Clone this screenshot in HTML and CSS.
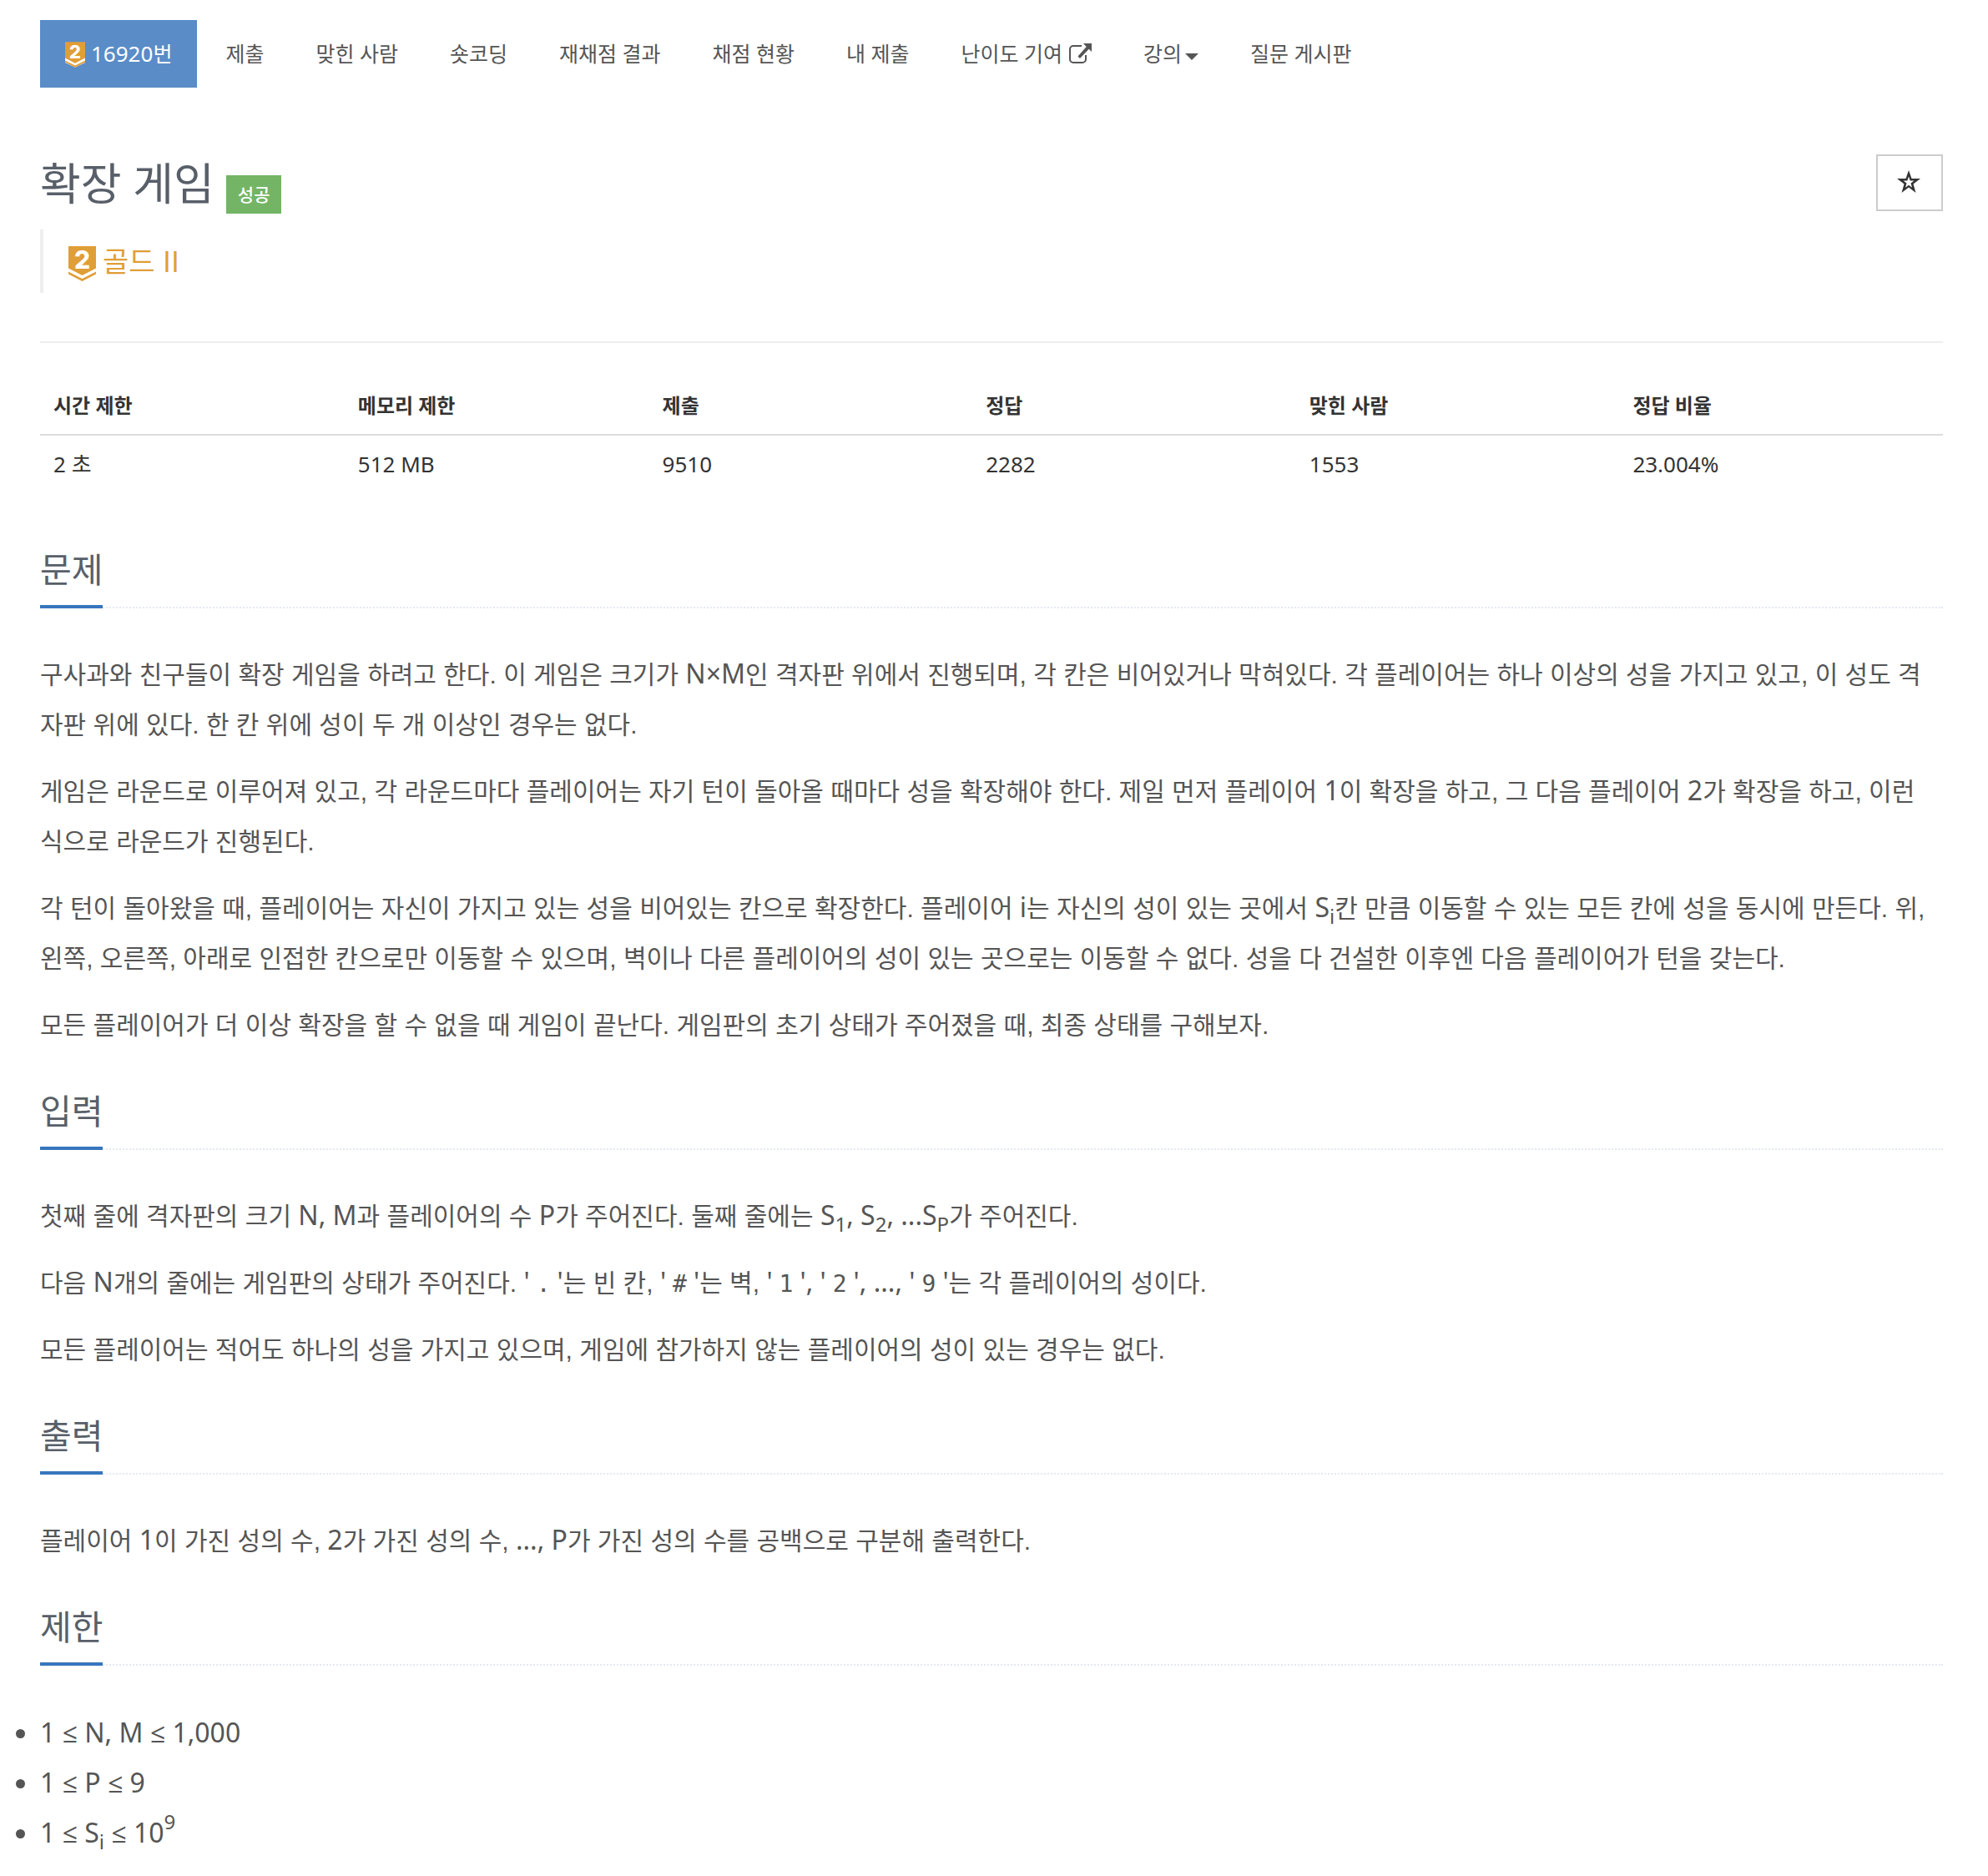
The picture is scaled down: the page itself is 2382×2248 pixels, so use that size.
FILE: index.html
```
<!DOCTYPE html>
<html lang="ko">
<head>
<meta charset="utf-8">
<meta name="viewport" content="width=device-width, initial-scale=1">
<title>16920번: 확장 게임</title>
<link rel="stylesheet" href="styles.css">
</head>
<body>
<nav aria-label="문제 메뉴">
  <ul class="menu">
    <li><a class="menu-link active" href="#"><svg class="tier-small" viewBox="0 0 33 42" aria-hidden="true">
      <path fill="#fff" d="M0 26h33v8L16.500 42 0 34z"/>
      <path fill="#e09e37" d="M0 0h33v26.500L16.500 35 0 26.500z"/>
      <path fill="#e09e37" d="M0 30.500l16.500 8.500 16.500-8.500v3L16.500 42 0 33.500z"/>
      <text class="tier-digit" x="16.500" y="27" text-anchor="middle">2</text>
    </svg><span><span class="latin">16920</span>번</span></a></li>
    <li><a class="menu-link" href="#">제출</a></li>
    <li><a class="menu-link" href="#">맞힌 사람</a></li>
    <li><a class="menu-link" href="#">숏코딩</a></li>
    <li><a class="menu-link" href="#">재채점 결과</a></li>
    <li><a class="menu-link" href="#">채점 현황</a></li>
    <li><a class="menu-link" href="#">내 제출</a></li>
    <li><a class="menu-link" href="#">난이도 기여
      <svg class="external" viewBox="0 0 27 24" aria-hidden="true"><path fill="none" stroke="currentColor" stroke-width="2" d="M15 3H5a4 4 0 0 0-4 4v12a4 4 0 0 0 4 4h11a4 4 0 0 0 4-4v-5"/><path fill="currentColor" d="M17 0h10v10l-3.300-3.300L13 18l-2.500-2.500L20.700 4z"/></svg></a></li>
    <li><a class="menu-link" href="#">강의<span class="caret"></span></a></li>
    <li><a class="menu-link" href="#">질문 게시판</a></li>
  </ul>
</nav>
<main>
  <header class="page-header">
    <div>
      <h1>확장 게임 <span class="label">성공</span></h1>
      <blockquote class="tier"><svg class="tier-large" viewBox="0 0 33 42" aria-hidden="true">
        <path fill="#e09e37" d="M0 0h33v26.500L16.500 35 0 26.500z"/>
        <path fill="#e09e37" d="M0 30.500l16.500 8.500 16.500-8.500v3L16.500 42 0 33.500z"/>
        <text class="tier-digit" x="16.500" y="27" text-anchor="middle">2</text>
      </svg>골드 II</blockquote>
    </div>
    <button class="favorite" type="button" aria-label="즐겨찾기"><svg viewBox="0 0 28 27" aria-hidden="true"><path fill="currentColor" fill-rule="evenodd" d="M14 0l3.500 10H28l-8.500 6.500L22.500 27 14 20.500 5.500 27l3-10.500L0 10h10.500zM14 7.500l-1.700 5H7.500l4 3L10 20.800l4-3.100 4 3.100-1.500-5.300 4-3h-4.800z"/></svg></button>
  </header>
  <table class="info">
    <thead>
      <tr><th class="limit" scope="col">시간 제한</th><th class="limit" scope="col">메모리 제한</th><th scope="col">제출</th><th scope="col">정답</th><th scope="col">맞힌 사람</th><th scope="col">정답 비율</th></tr>
    </thead>
    <tbody>
      <tr><td>2 초</td><td>512 MB</td><td>9510</td><td>2282</td><td>1553</td><td>23.004%</td></tr>
    </tbody>
  </table>
  <section>
    <div class="headline"><h2>문제</h2></div>
    <p>구사과와 친구들이 확장 게임을 하려고 한다. 이 게임은 크기가 <span class="latin">N×M</span>인 격자판 위에서 진행되며, 각 칸은 비어있거나 막혀있다. 각 플레이어는 하나 이상의 성을 가지고 있고, 이 성도 격자판 위에 있다. 한 칸 위에 성이 두 개 이상인 경우는 없다.</p>
    <p>게임은 라운드로 이루어져 있고, 각 라운드마다 플레이어는 자기 턴이 돌아올 때마다 성을 확장해야 한다. 제일 먼저 플레이어 <span class="latin">1</span>이 확장을 하고, 그 다음 플레이어 <span class="latin">2</span>가 확장을 하고, 이런 식으로 라운드가 진행된다.</p>
    <p>각 턴이 돌아왔을 때, 플레이어는 자신이 가지고 있는 성을 비어있는 칸으로 확장한다. 플레이어 <span class="latin">i</span>는 자신의 성이 있는 곳에서 <span class="latin">S<sub>i</sub></span>칸 만큼 이동할 수 있는 모든 칸에 성을 동시에 만든다. 위, 왼쪽, 오른쪽, 아래로 인접한 칸으로만 이동할 수 있으며, 벽이나 다른 플레이어의 성이 있는 곳으로는 이동할 수 없다. 성을 다 건설한 이후엔 다음 플레이어가 턴을 갖는다.</p>
    <p>모든 플레이어가 더 이상 확장을 할 수 없을 때 게임이 끝난다. 게임판의 초기 상태가 주어졌을 때, 최종 상태를 구해보자.</p>
  </section>
  <section>
    <div class="headline"><h2>입력</h2></div>
    <p>첫째 줄에 격자판의 크기 <span class="latin">N, M</span>과 플레이어의 수 <span class="latin">P</span>가 주어진다. 둘째 줄에는 <span class="latin">S<sub>1</sub>, S<sub>2</sub>, ...S<sub>P</sub></span>가 주어진다.</p>
    <p>다음 <span class="latin">N</span>개의 줄에는 게임판의 상태가 주어진다. <span class="latin">'<code>.</code>'</span>는 빈 칸, <span class="latin">'<code>#</code>'</span>는 벽, <span class="latin">'<code>1</code>', '<code>2</code>', ..., '<code>9</code>'</span>는 각 플레이어의 성이다.</p>
    <p>모든 플레이어는 적어도 하나의 성을 가지고 있으며, 게임에 참가하지 않는 플레이어의 성이 있는 경우는 없다.</p>
  </section>
  <section>
    <div class="headline"><h2>출력</h2></div>
    <p>플레이어 <span class="latin">1</span>이 가진 성의 수, <span class="latin">2</span>가 가진 성의 수, <span class="latin">..., P</span>가 가진 성의 수를 공백으로 구분해 출력한다.</p>
  </section>
  <section>
    <div class="headline"><h2>제한</h2></div>
    <ul class="limits">
      <li>1 ≤ N, M ≤ 1,000</li>
      <li>1 ≤ P ≤ 9</li>
      <li>1 ≤ S<sub>i</sub> ≤ 10<sup>9</sup></li>
    </ul>
  </section>
</main>
</body>
</html>
```
FILE: styles.css
```
* { box-sizing: border-box; }

body {
  margin: 0;
  padding: 24px 54px 0 48px;
  background: #fff;
  color: #555;
  font-family: "Noto Sans", "Open Sans", "Noto Sans CJK KR", sans-serif;
  font-size: 30px;
  line-height: 60px;
}

.latin { font-family: "Noto Sans", "Open Sans", sans-serif; font-size: 32px; line-height: 1; }

.menu {
  display: flex;
  flex-wrap: wrap;
  gap: 2px;
  margin: 0;
  padding: 0;
  list-style: none;
}

.menu-link {
  display: flex;
  align-items: center;
  height: 81px;
  padding: 0 30px 2px;
  color: #555;
  font-size: 25px;
  line-height: 36px;
  text-decoration: none;
}

.menu-link .latin { font-size: 26px; }
.menu-link.active { margin-right: 2px; background: #5a8cc7; color: #fff; }

.tier-digit { fill: #fff; font: 800 30px/1 Inter, sans-serif; }
.tier-small, .tier-large { overflow: visible; }
.tier-small { width: 24px; height: 31px; margin: 4px 7px 0 0; }
.tier-large { width: 33px; height: 42px; margin: 8px 8px 0 0; }
.external { width: 27px; height: 24px; margin-left: 8px; }

.caret {
  margin: 8px 0 0 4px;
  border: 8px solid transparent;
  border-top-color: currentColor;
  border-bottom: 0;
}

.page-header {
  display: flex;
  justify-content: space-between;
  align-items: flex-start;
  padding: 80px 0 58px;
  border-bottom: 2px solid #eee;
}

h1, h2 { margin: 0; color: #585f69; font-weight: 400; }

h1 {
  display: flex;
  align-items: flex-end;
  gap: 14px;
  height: 71px;
  margin-bottom: 19px;
  font-size: 53px;
  line-height: 72px;
}

.label {
  padding: 0 14px;
  background: #73b564;
  color: #fff;
  font-size: 21px;
  font-weight: 500;
  line-height: 46px;
}

.tier {
  display: flex;
  align-items: center;
  height: 76px;
  margin: 0;
  padding: 0 0 2px 30px;
  border-left: 4px solid #eee;
  color: #e09e37;
  font-family: "Noto Sans CJK KR", sans-serif;
  font-size: 34px;
}

.favorite {
  display: flex;
  align-items: center;
  justify-content: center;
  width: 80px;
  height: 68px;
  padding: 0 2px 4px 0;
  border: 2px solid #ccc;
  background: #fff;
  color: #333;
}

.favorite svg { width: 28px; height: 27px; }

.info {
  width: 100%;
  margin: 40px 0 60px;
  border-collapse: collapse;
  table-layout: fixed;
  color: #333;
  font-size: 26px;
  line-height: 37px;
  text-align: left;
}

.info th { width: 17%; padding: 16px; border-bottom: 2px solid #ddd; font-size: 24px; }
.info .limit { width: 16%; }
.info td { padding: 16px; }

.headline { margin-bottom: 50px; border-bottom: 2px dotted #e4e9f0; }

h2 {
  width: fit-content;
  margin-bottom: -2px;
  padding-bottom: 12px;
  border-bottom: 4px solid #3776bd;
  font-size: 41px;
  line-height: 62px;
}

section + section { padding-top: 21px; }

p {
  margin: 0 0 20px;
  padding-right: 16px;
  font-family: "Liberation Sans", "Noto Sans CJK KR", sans-serif;
}

sub, sup { position: relative; font-size: 24px; line-height: 0; vertical-align: baseline; }
sub { bottom: -8px; }
sup { top: -16px; }
code { padding: 0 8px; font-family: "DejaVu Sans Mono", monospace; font-size: 28px; line-height: 1; }

.limits { margin: 0; padding: 0; font-size: 32px; }
```
